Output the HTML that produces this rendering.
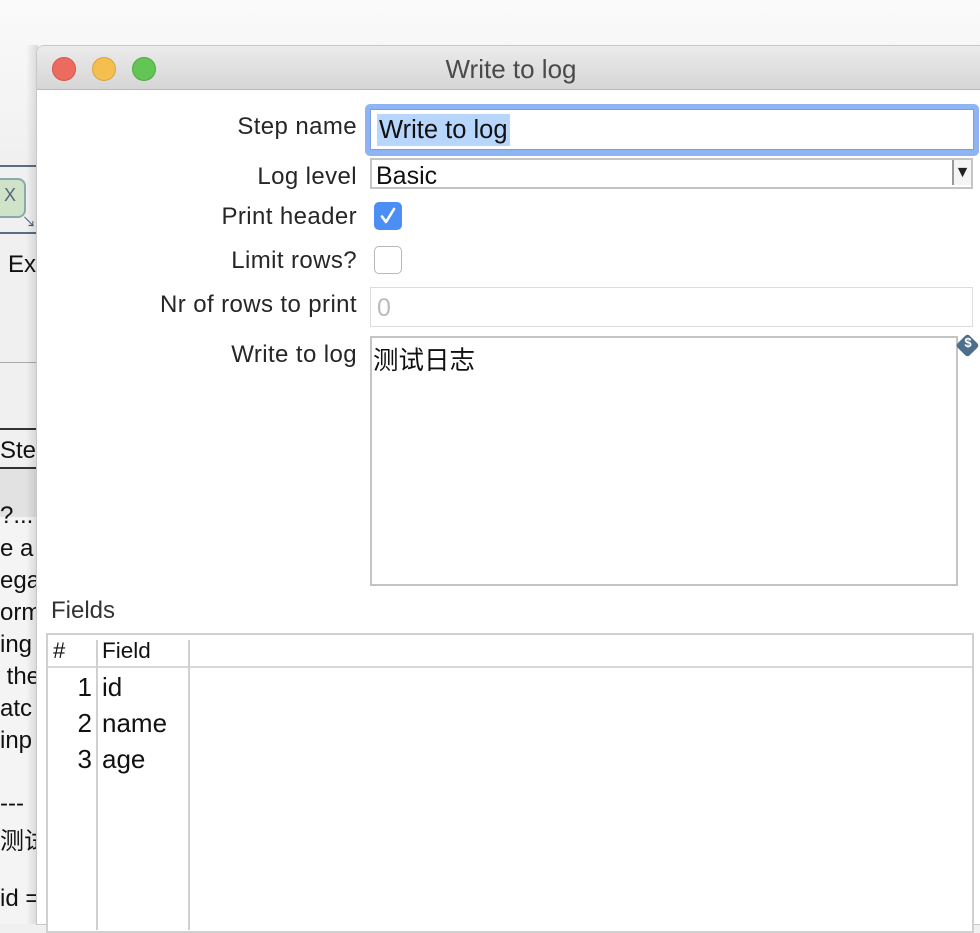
<!DOCTYPE html>
<html><head><meta charset="utf-8"><style>
*{margin:0;padding:0;box-sizing:border-box}
body{width:980px;height:924px;overflow:hidden;position:relative;background:#f0f0f0;font-family:"Liberation Sans","Noto Sans CJK SC",sans-serif;color:#222}
.a{position:absolute}
.lt{font-size:24px;color:#111;white-space:nowrap}
.lbl{position:absolute;right:623px;font-size:24px;letter-spacing:0.4px;color:#262626;white-space:nowrap;text-align:right}
</style></head><body>
<div class="a" style="left:0;top:0;width:980px;height:160px;background:linear-gradient(#fafafa,#f0f0f0)"></div>
<div class="a" style="left:0;top:165px;width:40px;height:2px;background:#5a6e82"></div>
<div class="a" style="left:0;top:232px;width:40px;height:2px;background:#5a6e82"></div>
<div class="a" style="left:0;top:178px;width:26px;height:40px;background:#cfe3c8;border:2px solid #8aa;border-left:none;border-radius:0 8px 8px 0"></div>
<div class="a" style="left:4px;top:185px;font-size:18px;color:#567">X</div>
<div class="a" style="left:22px;top:212px;font-size:14px;color:#3a5a7a">↘</div>
<div class="a lt" style="left:8px;top:251px">Ex</div>
<div class="a" style="left:0;top:362px;width:40px;height:1px;background:#aaa"></div>
<div class="a" style="left:0;top:428px;width:40px;height:2px;background:#333"></div>
<div class="a lt" style="left:0;top:437px">Ste</div>
<div class="a" style="left:0;top:467px;width:40px;height:2px;background:#333"></div>
<div class="a" style="left:0;top:469px;width:40px;height:48px;background:#e2e2e2"></div>
<div class="a" style="left:0;top:517px;width:40px;height:407px;background:#f4f4f4"></div>
<div class="a lt" style="left:0;top:502px">?...</div>
<div class="a lt" style="left:0;top:535px">e a</div>
<div class="a lt" style="left:0;top:567px">ega</div>
<div class="a lt" style="left:0;top:599px">orm</div>
<div class="a lt" style="left:0;top:631px">ing</div>
<div class="a lt" style="left:0;top:663px">&nbsp;the</div>
<div class="a lt" style="left:0;top:695px">atc</div>
<div class="a lt" style="left:0;top:727px">inp</div>
<div class="a lt" style="left:0;top:790px">---</div>
<div class="a lt" style="left:0;top:821px">测试</div>
<div class="a lt" style="left:0;top:885px">id =</div>
<div class="a" style="left:26px;top:45px;width:12px;height:879px;background:linear-gradient(90deg,rgba(0,0,0,0),rgba(0,0,0,0.12))"></div>
<div class="a" style="left:36px;top:45px;width:950px;height:880px;background:#fff;border-radius:8px 0 0 0;border:1px solid #c8c8c8;overflow:hidden">
 <div class="a" style="left:0;top:0;width:100%;height:44px;background:linear-gradient(#ebebeb,#d6d6d6);border-bottom:1px solid #b8b8b8"></div>
 <div class="a" style="left:15px;top:11px;width:24px;height:24px;border-radius:50%;background:#ed6a5e;border:1px solid #d55247"></div>
 <div class="a" style="left:55px;top:11px;width:24px;height:24px;border-radius:50%;background:#f5bf4f;border:1px solid #d9a33a"></div>
 <div class="a" style="left:95px;top:11px;width:24px;height:24px;border-radius:50%;background:#62c554;border:1px solid #4ea943"></div>
 <div class="a" style="left:0;top:8px;width:948px;text-align:center;font-size:26px;color:#4a4a4a">Write to log</div>
</div>
<div class="lbl" style="top:113px">Step name</div>
<div class="lbl" style="top:163px">Log level</div>
<div class="lbl" style="top:203px">Print header</div>
<div class="lbl" style="top:247px">Limit rows?</div>
<div class="lbl" style="top:291px">Nr of rows to print</div>
<div class="lbl" style="top:341px">Write to log</div>
<div class="a" style="left:365px;top:104px;width:614px;height:52px;border-radius:5px;background:#8fb4f3"></div>
<div class="a" style="left:370px;top:109px;width:604px;height:41px;background:#fff;border:1px solid #7a9fe0"></div>
<div class="a" style="left:377px;top:114px;height:32px;padding:0 2px;background:#b8d6fb;font-size:25.5px;color:#111;line-height:32px">Write to log</div>
<div class="a" style="left:370px;top:158px;width:603px;height:31px;border:2px solid #c4c4c4;background:#fff"></div>
<div class="a" style="left:376px;top:162px;font-size:25px;color:#111">Basic</div>
<div class="a" style="left:952px;top:160px;width:19px;height:25px;border-left:2px solid #999;background:#f4f4f4;font-size:16px;text-align:center;line-height:25px">▼</div>
<div class="a" style="left:374px;top:202px;width:28px;height:28px;border-radius:5px;background:#4b8ef5"></div>
<svg class="a" style="left:374px;top:202px" width="28" height="28"><path d="M8 14.5 L12 20 L20 7" stroke="#fff" stroke-width="2.6" fill="none" stroke-linecap="round" stroke-linejoin="round"/></svg>
<div class="a" style="left:374px;top:246px;width:28px;height:28px;border-radius:5px;background:#fff;border:1px solid #b8b8b8"></div>
<div class="a" style="left:370px;top:287px;width:603px;height:40px;border:1px solid #ddd;background:#fff"></div>
<div class="a" style="left:377px;top:294px;font-size:25px;color:#bbb">0</div>
<div class="a" style="left:370px;top:336px;width:588px;height:250px;border:2px solid #c4c4c4;background:#fff"></div>
<div class="a" style="left:373px;top:340px;font-size:25.5px;color:#111">测试日志</div>
<div class="a" style="left:959px;top:337px;width:17px;height:17px;background:#4d6f8c;transform:rotate(45deg);border-radius:3px"></div>
<div class="a" style="left:962px;top:335px;width:12px;font-size:13px;font-weight:bold;color:#fff;text-align:center">$</div>
<div class="a" style="left:51px;top:597px;font-size:24px;color:#333">Fields</div>
<div class="a" style="left:46px;top:633px;width:928px;height:300px;border:2px solid #d0d0d0;background:#fff"></div>
<div class="a" style="left:48px;top:666px;width:924px;height:2px;background:#d8d8d8"></div>
<div class="a" style="left:96px;top:640px;width:2px;height:290px;background:#d0d0d0"></div>
<div class="a" style="left:188px;top:640px;width:2px;height:290px;background:#d0d0d0"></div>
<div class="a" style="left:53px;top:638px;font-size:22px;color:#111">#</div>
<div class="a" style="left:102px;top:638px;font-size:22.5px;color:#111">Field</div>
<div class="a" style="left:50px;top:669px;width:42px;text-align:right;font-size:26px;color:#111;line-height:36px">1<br>2<br>3</div>
<div class="a" style="left:102px;top:669px;font-size:26px;color:#111;line-height:36px">id<br>name<br>age</div>
</body></html>
